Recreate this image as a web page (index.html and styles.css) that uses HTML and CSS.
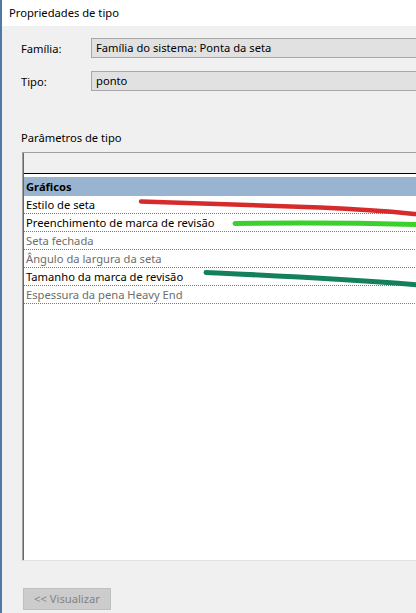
FILE: index.html
```html
<!DOCTYPE html>
<html lang="pt">
<head>
<meta charset="utf-8">
<title>Propriedades de tipo</title>
<link rel="stylesheet" href="styles.css">
</head>
<body>
<div class="window">
  <div class="titlebar">Propriedades de tipo</div>
  <div class="content">
    <div class="field">
      <span class="label">Família:</span>
      <div class="box">Família do sistema: Ponta da seta</div>
    </div>
    <div class="field field-second">
      <span class="label">Tipo:</span>
      <div class="box">ponto</div>
    </div>
    <div class="section-label">Parâmetros de tipo</div>
    <div class="grid">
      <div class="grid-head"></div>
      <div class="group">Gráficos</div>
      <div class="row">Estilo de seta</div>
      <div class="row">Preenchimento de marca de revisão</div>
      <div class="row muted">Seta fechada</div>
      <div class="row muted">Ângulo da largura da seta</div>
      <div class="row">Tamanho da marca de revisão</div>
      <div class="row muted">Espessura da pena Heavy End</div>
    </div>
    <div class="footer">
      <div class="btn">&lt;&lt; Visualizar</div>
    </div>
  </div>
  <svg class="marks" width="416" height="613" viewBox="0 0 416 613">
    <path d="M141 201.5 C 200 203, 260 205, 320 207.5 S 395 212, 420 214.5" stroke="#d62a2b" stroke-width="4.5" fill="none" stroke-linecap="round"/>
    <path d="M235 223.5 C 300 222.5, 360 223, 420 224.5" stroke="#3bd12b" stroke-width="5" fill="none" stroke-linecap="round"/>
    <path d="M206 272.5 C 260 275, 330 278, 420 285" stroke="#13805a" stroke-width="5" fill="none" stroke-linecap="round"/>
  </svg>
</div>
</body>
</html>
```
FILE: styles.css
```css
html, body {
  margin: 0;
  padding: 0;
}
body {
  width: 416px;
  height: 613px;
  overflow: hidden;
  background: #f0f0f0;
  font-family: "Noto Sans", "Open Sans", sans-serif;
  font-size: 11.2px;
  color: #000;
}
.window {
  position: relative;
  width: 416px;
  height: 613px;
  box-sizing: border-box;
  border-left: 2px solid #4f79a4;
  background: #f0f0f0;
  overflow: hidden;
}
.titlebar {
  height: 26px;
  background: #fff;
  padding-left: 7px;
  font-size: 11.2px;
  line-height: 26px;
}
.content {
  padding-left: 19px;
  width: 440px;
}
.field {
  display: flex;
  align-items: center;
  margin-top: 12px;
  height: 20px;
}
.field-second {
  margin-top: 13px;
}
.label {
  width: 70px;
  flex: none;
}
.box {
  flex: 1;
  height: 20px;
  box-sizing: border-box;
  border: 1px solid #a8a8a8;
  border-right: none;
  background: #e1e1e1;
  padding-left: 4px;
  line-height: 18px;
}
.section-label {
  margin-top: 40px;
  height: 14px;
  line-height: 14px;
}
.grid {
  margin-top: 7px;
  margin-left: 1px;
  height: 409px;
  box-sizing: border-box;
  border-top: 1px solid #a0a0a0;
  border-left: 1px solid #a0a0a0;
  border-bottom: 1px solid #e3e3e3;
  box-shadow: inset 1px 0 0 #696969;
  background: #fff;
}
.grid-head {
  height: 20px;
  margin-left: 1px;
  background: #f0f0f0;
  border-bottom: 1px solid #000;
}
.group {
  margin-top: 3px;
  margin-left: 1px;
  height: 19px;
  background: #99b4d1;
  font-weight: bold;
  line-height: 19px;
  padding-left: 2px;
}
.row {
  height: 18px;
  box-sizing: border-box;
  margin-left: 1px;
  padding-left: 2px;
  border-bottom: 1px dotted #7a7a7a;
  line-height: 17px;
}
.muted {
  color: #6d6d6d;
}
.footer {
  padding-top: 27px;
  padding-left: 2px;
}
.btn {
  width: 88px;
  height: 22px;
  box-sizing: border-box;
  border: 1px solid #bfbfbf;
  background: #cccccc;
  color: #838383;
  text-align: center;
  line-height: 20px;
}
.marks {
  position: absolute;
  left: -2px;
  top: 0;
  pointer-events: none;
}
```
